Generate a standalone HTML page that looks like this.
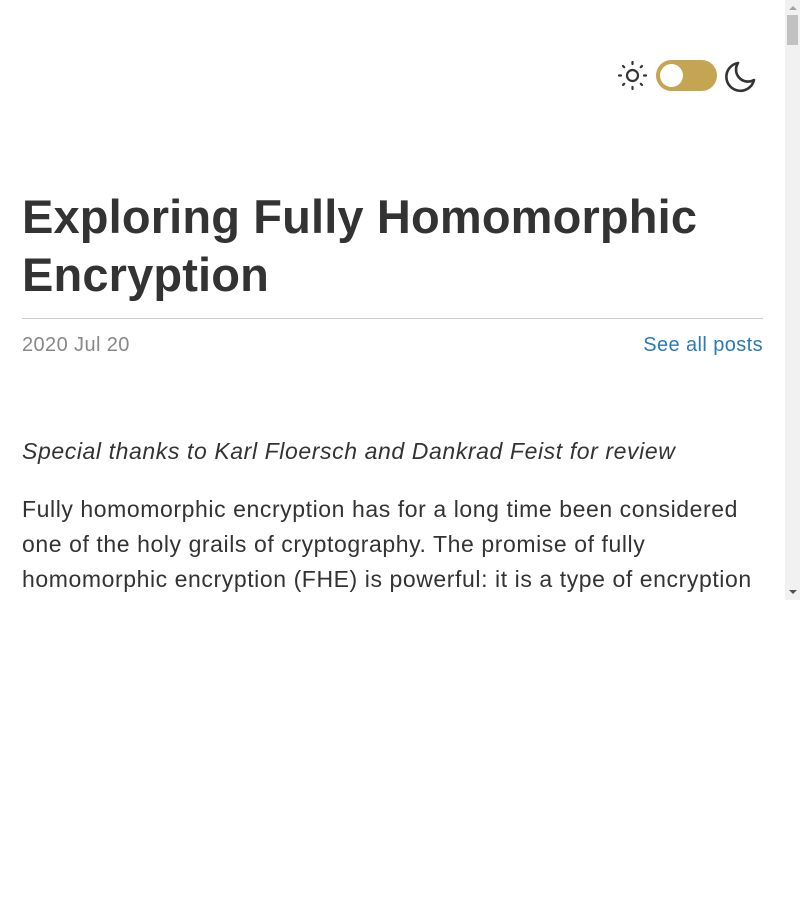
<!DOCTYPE html>
<html><head><style>
html,body{margin:0;padding:0;background:#fff;}
body{width:800px;height:900px;position:relative;overflow:hidden;font-family:"Liberation Sans",sans-serif;color:#333;}
.vp{position:absolute;left:0;top:0;width:785px;height:600px;overflow:hidden;}
.sb{position:absolute;left:785px;top:0;width:15px;height:600px;background:#f1f1f1;}
.thumb{position:absolute;left:2px;top:15px;width:11px;height:30px;background:#c1c1c1;}
.up{position:absolute;left:4px;top:6px;border-left:4px solid transparent;border-right:4px solid transparent;border-bottom:4px solid #a3a3a3;}
.dn{position:absolute;left:4px;top:590px;border-left:4px solid transparent;border-right:4px solid transparent;border-top:4px solid #505050;}
h1{position:absolute;left:22px;top:188px;margin:0;font-size:47px;line-height:58px;font-weight:bold;color:#333;width:740px;letter-spacing:0.15px;}
.hr{position:absolute;left:22px;top:318px;width:741px;height:1px;background:#ccc;}
.date{position:absolute;left:22px;top:334px;font-size:20px;color:#888;letter-spacing:0.4px;}
.all{position:absolute;right:22px;top:334px;font-size:20px;color:#2a7ab8;letter-spacing:0.4px;}
.it{position:absolute;left:22px;top:438px;font-size:23px;font-style:italic;letter-spacing:0.6px;white-space:nowrap;}
.p{position:absolute;left:22px;top:492px;font-size:23px;line-height:35px;letter-spacing:0.58px;width:745px;}
.tog{position:absolute;left:656px;top:60px;width:61px;height:31px;border-radius:16px;background:#c4a552;}
.knob{position:absolute;left:4px;top:4px;width:23px;height:23px;border-radius:50%;background:#fff;}
</style></head><body>
<div class="vp">
<svg style="position:absolute;left:617px;top:60px" width="31" height="31" viewBox="0 0 31 31" fill="none" stroke="#333" stroke-width="2.2" stroke-linecap="round">
<circle cx="15.5" cy="15.5" r="5.5"/>
<path d="M15.5 2v2M15.5 27v2M2 15.5h2M27 15.5h2M6 6l1.2 1.2M23.8 23.8L25 25M6 25l1.2-1.2M23.8 7.2L25 6"/>
</svg>
<div class="tog"><div class="knob"></div></div>
<svg style="position:absolute;left:724px;top:60px" width="34" height="34" viewBox="0 0 34 34" fill="none" stroke="#333" stroke-width="2.6" stroke-linejoin="round">
<path d="M14 3 A14 14 0 1 0 30 20 A12 12 0 0 1 14 3 Z"/>
</svg>
<h1>Exploring Fully Homomorphic Encryption</h1>
<div class="hr"></div>
<div class="date">2020 Jul 20</div>
<div class="all">See all posts</div>
<div class="it">Special thanks to Karl Floersch and Dankrad Feist for review</div>
<div class="p">Fully homomorphic encryption has for a long time been considered one of the holy grails of cryptography. The promise of fully homomorphic encryption (FHE) is powerful: it is a type of encryption that allows a third party to perform computations on encrypted data</div>
</div>
<div class="sb"><div class="up"></div><div class="thumb"></div><div class="dn"></div></div>
</body></html>
